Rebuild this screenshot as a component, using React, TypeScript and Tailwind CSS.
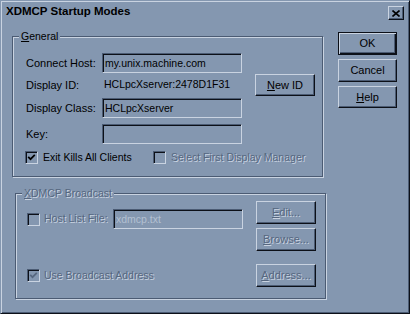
import React from "react";

const FACE = "bg-[#8497b0]";

function Btn({ children, def, disabled, w = "w-[60px]", h = "h-[23px]" }: { children: React.ReactNode; def?: boolean; disabled?: boolean; w?: string; h?: string }) {
    const edge = def
        ? "border border-[#0c1018] shadow-[inset_1px_1px_0_#c9d3e1,inset_-1px_-1px_0_#0c1018,inset_-2px_-2px_0_#4b5b73]"
        : "border border-t-[#c9d3e1] border-l-[#c9d3e1] border-r-[#0c1018] border-b-[#0c1018] shadow-[inset_-1px_-1px_0_#4b5b73]";
    return (
        <div className={`${w} ${h} ${edge} flex items-center justify-center leading-[13px] text-[11px] ${disabled ? "text-[#56677f] [text-shadow:1px_1px_0_#c9d3e1]" : ""}`}>
            <span>{children}</span>
        </div>
    );
}

function Edit({ value, w, disabled }: { value?: string; w: string; disabled?: boolean }) {
    return (
        <div className={`${w} h-[20px] border border-t-[#4b5b73] border-l-[#4b5b73] border-r-[#c9d3e1] border-b-[#c9d3e1] shadow-[inset_1px_1px_0_#0c1018] flex items-center pl-[2px] leading-[13px] ${disabled ? "text-[#b3c0d2]" : ""}`}>
            {value}
        </div>
    );
}

function Check({ checked, disabled }: { checked?: boolean; disabled?: boolean }) {
    return (
        <div className="w-[13px] h-[13px] shrink-0 border border-t-[#4b5b73] border-l-[#4b5b73] border-r-[#c9d3e1] border-b-[#c9d3e1] shadow-[inset_1px_1px_0_#0c1018] flex items-center justify-center">
            {checked && (
                <svg width="9" height="9" viewBox="0 0 9 9">
                    <path d="M1.2 3.8 L3.5 6.2 L7.8 1.8" fill="none" stroke={disabled ? "#56677f" : "#000"} strokeWidth="1.7" />
                </svg>
            )}
        </div>
    );
}

function Legend({ children, disabled }: { children: React.ReactNode; disabled?: boolean }) {
    return (
        <div className={`self-start -mt-[7px] ml-[6px] px-[2px] ${FACE} leading-[13px] ${disabled ? "text-[#56677f] [text-shadow:1px_1px_0_#c9d3e1]" : ""}`}>
            {children}
        </div>
    );
}

const groupEdge = "border border-[#4b5b73] shadow-[inset_1px_1px_0_#c9d3e1,1px_1px_0_#c9d3e1]";
const dim = "text-[#56677f] [text-shadow:1px_1px_0_#c9d3e1]";

export default function App() {
    return (
        <div className={`w-[410px] h-[314px] ${FACE} border border-t-[#8497b0] border-l-[#8497b0] border-r-[#0c1018] border-b-[#0c1018] shadow-[inset_1px_1px_0_#c9d3e1,inset_-1px_-1px_0_#4b5b73] font-['Liberation_Sans',Arial,sans-serif] text-[10.5px] text-black`}>
            {/* title */}
            <div className="flex h-[24px] pl-[5px] pr-[5px] pt-[3px]">
                <span className="font-bold text-[11.5px] leading-[14px]">XDMCP Startup Modes</span>
                <div className="ml-auto mt-[2px] w-[16px] h-[14px] border border-t-[#c9d3e1] border-l-[#c9d3e1] border-r-[#0c1018] border-b-[#0c1018] shadow-[inset_-1px_-1px_0_#4b5b73] flex items-center justify-center">
                    <svg width="8" height="7" viewBox="0 0 8 7">
                        <path d="M0.5 0.5 L7.5 6.5 M7.5 0.5 L0.5 6.5" stroke="#000" strokeWidth="1.6" />
                    </svg>
                </div>
            </div>

            <div className="flex">
                <div className="flex flex-col">
                    {/* General */}
                    <div className={`ml-[11px] mt-[11px] w-[311px] h-[141px] ${groupEdge} flex flex-col`}>
                        <Legend><u>G</u>eneral</Legend>
                        <div className="flex items-center mt-[10px] pl-[13px]">
                            <span className="w-[76px] text-[11px]">Connect Host:</span>
                            <Edit value="my.unix.machine.com" w="w-[140px]" />
                        </div>
                        <div className="flex items-center mt-[1px] pl-[13px] h-[22px]">
                            <span className="w-[76px] text-[11px]">Display ID:</span>
                            <span className="w-[153px] pl-[2px]">HCLpcXserver:2478D1F31</span>
                            <Btn h="h-[22px]"><u>N</u>ew ID</Btn>
                        </div>
                        <div className="flex items-center mt-[2px] pl-[13px]">
                            <span className="w-[76px] text-[11px]">Display Class:</span>
                            <Edit value="HCLpcXserver" w="w-[140px]" />
                        </div>
                        <div className="flex items-center mt-[6px] pl-[13px]">
                            <span className="w-[76px] text-[11px]">Key:</span>
                            <Edit w="w-[140px]" />
                        </div>
                        <div className="flex items-center mt-[7px] pl-[12px] h-[13px] leading-[13px]">
                            <div className="flex items-center gap-[5px] w-[128px]">
                                <Check checked />
                                <span>Exit Kills All Clients</span>
                            </div>
                            <div className="flex items-center gap-[5px]">
                                <Check />
                                <span className={dim}>Select First Display Manager</span>
                            </div>
                        </div>
                    </div>

                    {/* Broadcast */}
                    <div className={`ml-[14px] mt-[16px] w-[311px] h-[106px] ${groupEdge} flex flex-col`}>
                        <Legend disabled><u>X</u>DMCP Broadcast</Legend>
                        <div className="flex mt-[1px]">
                            <div className="w-[240px] flex flex-col pl-[11px]">
                                <div className="flex items-center mt-[8px]">
                                    <Check />
                                    <span className={`ml-[4px] w-[69px] ${dim}`}>Host List File:</span>
                                    <Edit value="xdmcp.txt" w="w-[130px]" disabled />
                                </div>
                                <div className="flex items-center mt-[40px] h-[13px]">
                                    <Check checked disabled />
                                    <span className={`ml-[4px] ${dim}`}>Use Broadcast Address</span>
                                </div>
                            </div>
                            <div className="flex flex-col">
                                <Btn disabled><u>E</u>dit...</Btn>
                                <div className="mt-[4px]"><Btn disabled><u>B</u>rowse...</Btn></div>
                                <div className="mt-[13px]"><Btn disabled><u>A</u>ddress...</Btn></div>
                            </div>
                        </div>
                    </div>
                </div>

                {/* dialog buttons */}
                <div className="ml-auto mr-[12px] mt-[7px] flex flex-col gap-[4px]">
                    <Btn def w="w-[59px]">OK</Btn>
                    <Btn w="w-[59px]">Cancel</Btn>
                    <Btn w="w-[59px]" h="h-[22px]"><u>H</u>elp</Btn>
                </div>
            </div>
        </div>
    );
}
